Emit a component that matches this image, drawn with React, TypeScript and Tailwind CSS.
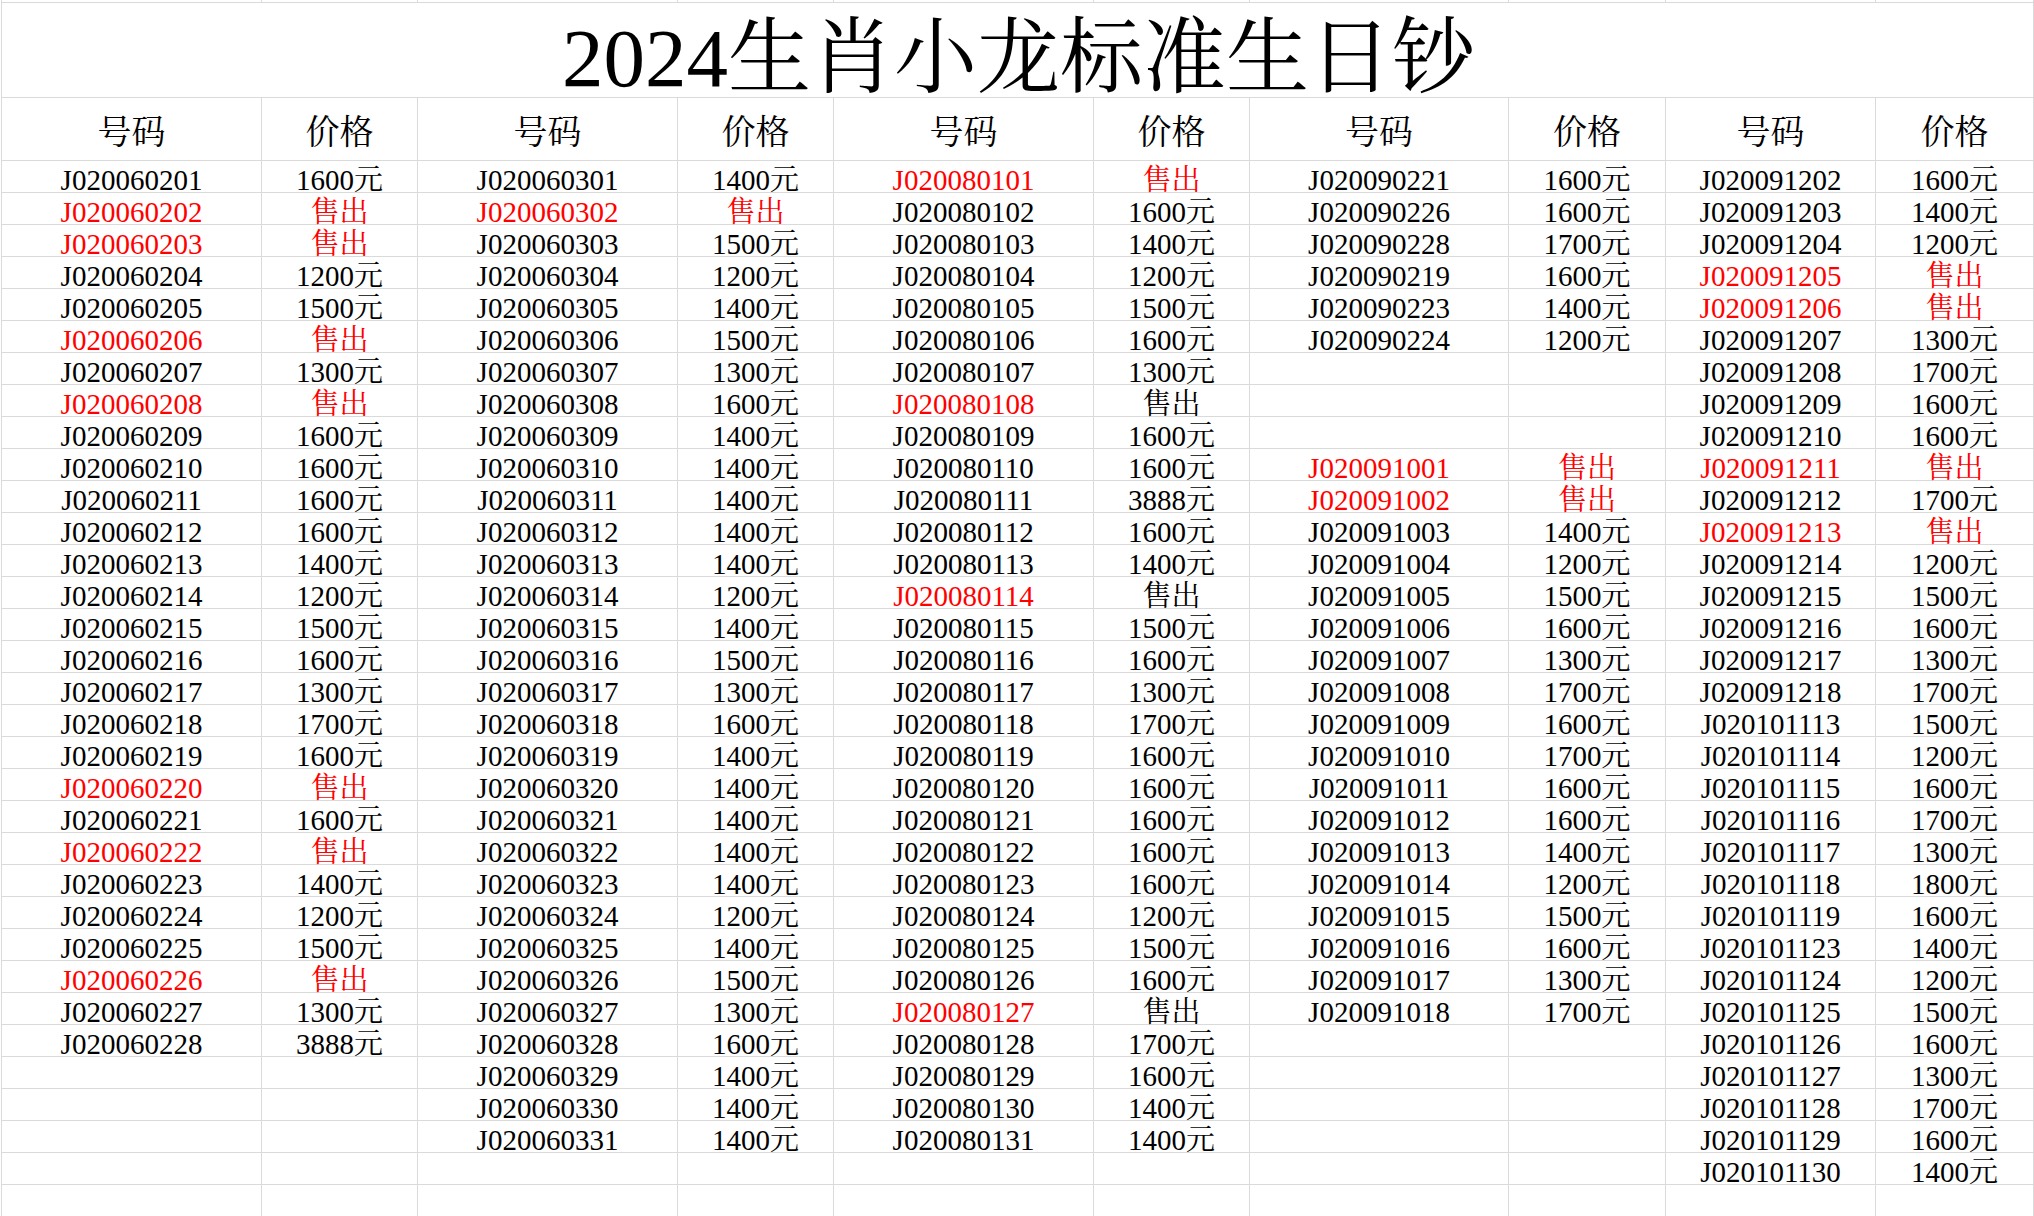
import React from "react";

type Cell = { code: string; price: string; codeRed?: boolean; priceRed?: boolean };

const S = "售出";

function parse(list: string[]): (Cell | null)[] {
  // format: "code|price|flags" flags: r = both red, c = code red only, "" = blank
  return list.map((s) => {
    if (!s) return null;
    const [code, price, f] = s.split("|");
    return {
      code,
      price: price === "S" ? S : price + "元",
      codeRed: f === "r" || f === "c",
      priceRed: f === "r",
    };
  });
}

const g1 = parse([
  "J020060201|1600", "J020060202|S|r", "J020060203|S|r", "J020060204|1200", "J020060205|1500",
  "J020060206|S|r", "J020060207|1300", "J020060208|S|r", "J020060209|1600", "J020060210|1600",
  "J020060211|1600", "J020060212|1600", "J020060213|1400", "J020060214|1200", "J020060215|1500",
  "J020060216|1600", "J020060217|1300", "J020060218|1700", "J020060219|1600", "J020060220|S|r",
  "J020060221|1600", "J020060222|S|r", "J020060223|1400", "J020060224|1200", "J020060225|1500",
  "J020060226|S|r", "J020060227|1300", "J020060228|3888",
]);

const g2 = parse([
  "J020060301|1400", "J020060302|S|r", "J020060303|1500", "J020060304|1200", "J020060305|1400",
  "J020060306|1500", "J020060307|1300", "J020060308|1600", "J020060309|1400", "J020060310|1400",
  "J020060311|1400", "J020060312|1400", "J020060313|1400", "J020060314|1200", "J020060315|1400",
  "J020060316|1500", "J020060317|1300", "J020060318|1600", "J020060319|1400", "J020060320|1400",
  "J020060321|1400", "J020060322|1400", "J020060323|1400", "J020060324|1200", "J020060325|1400",
  "J020060326|1500", "J020060327|1300", "J020060328|1600", "J020060329|1400", "J020060330|1400",
  "J020060331|1400",
]);

const g3 = parse([
  "J020080101|S|r", "J020080102|1600", "J020080103|1400", "J020080104|1200", "J020080105|1500",
  "J020080106|1600", "J020080107|1300", "J020080108|S|c", "J020080109|1600", "J020080110|1600",
  "J020080111|3888", "J020080112|1600", "J020080113|1400", "J020080114|S|c", "J020080115|1500",
  "J020080116|1600", "J020080117|1300", "J020080118|1700", "J020080119|1600", "J020080120|1600",
  "J020080121|1600", "J020080122|1600", "J020080123|1600", "J020080124|1200", "J020080125|1500",
  "J020080126|1600", "J020080127|S|c", "J020080128|1700", "J020080129|1600", "J020080130|1400",
  "J020080131|1400",
]);

const g4 = parse([
  "J020090221|1600", "J020090226|1600", "J020090228|1700", "J020090219|1600", "J020090223|1400",
  "J020090224|1200", "", "", "", "J020091001|S|r", "J020091002|S|r", "J020091003|1400",
  "J020091004|1200", "J020091005|1500", "J020091006|1600", "J020091007|1300", "J020091008|1700",
  "J020091009|1600", "J020091010|1700", "J020091011|1600", "J020091012|1600", "J020091013|1400",
  "J020091014|1200", "J020091015|1500", "J020091016|1600", "J020091017|1300", "J020091018|1700",
]);

const g5 = parse([
  "J020091202|1600", "J020091203|1400", "J020091204|1200", "J020091205|S|r", "J020091206|S|r",
  "J020091207|1300", "J020091208|1700", "J020091209|1600", "J020091210|1600", "J020091211|S|r",
  "J020091212|1700", "J020091213|S|r", "J020091214|1200", "J020091215|1500", "J020091216|1600",
  "J020091217|1300", "J020091218|1700", "J020101113|1500", "J020101114|1200", "J020101115|1600",
  "J020101116|1700", "J020101117|1300", "J020101118|1800", "J020101119|1600", "J020101123|1400",
  "J020101124|1200", "J020101125|1500", "J020101126|1600", "J020101127|1300", "J020101128|1700",
  "J020101129|1600", "J020101130|1400",
]);

const groups = [g1, g2, g3, g4, g5];
const ROWS = 33;

const line = "border-r border-b border-[#dadada]";
const font = "font-['Liberation_Serif','Noto_Serif_CJK_SC','Noto_Sans_CJK_SC',serif]";

function DataCell({ text, red }: { text?: string; red?: boolean }) {
  return (
    <div
      className={`${line} h-[32px] flex items-end justify-center whitespace-nowrap text-[29px] leading-[23px] ${
        red ? "text-[#ff0000]" : "text-black"
      }`}
    >
      {text ?? ""}
    </div>
  );
}

export default function App() {
  const rows: React.ReactNode[] = [];
  for (let r = 0; r < ROWS; r++) {
    groups.forEach((g, gi) => {
      const c = g[r];
      rows.push(<DataCell key={`c-${r}-${gi}`} text={c?.code} red={c?.codeRed} />);
      rows.push(<DataCell key={`p-${r}-${gi}`} text={c?.price} red={c?.priceRed} />);
    });
  }

  return (
    <div className={`w-[2034px] h-[1216px] overflow-hidden bg-white ${font}`}>
      <div className="ml-px border-l border-[#dadada] grid grid-cols-[260px_156px_260px_156px_260px_156px_259px_157px_210px_158px]">
        {Array.from({ length: 10 }).map((_, i) => (
          <div key={`top-${i}`} className={`${line} h-[3px]`} />
        ))}
        <div className={`${line} col-span-10 h-[95px] flex items-center justify-center pt-[17px] pl-[2px]`}>
          <span className="text-[83px] leading-none text-black whitespace-nowrap">2024生肖小龙标准生日钞</span>
        </div>
        {Array.from({ length: 5 }).flatMap((_, i) => [
          <div key={`h1-${i}`} className={`${line} h-[63px] flex items-center justify-center pt-[7px] text-[34px] leading-none text-black`}>
            号码
          </div>,
          <div key={`h2-${i}`} className={`${line} h-[63px] flex items-center justify-center pt-[7px] text-[34px] leading-none text-black`}>
            价格
          </div>,
        ])}
        {rows}
      </div>
    </div>
  );
}
